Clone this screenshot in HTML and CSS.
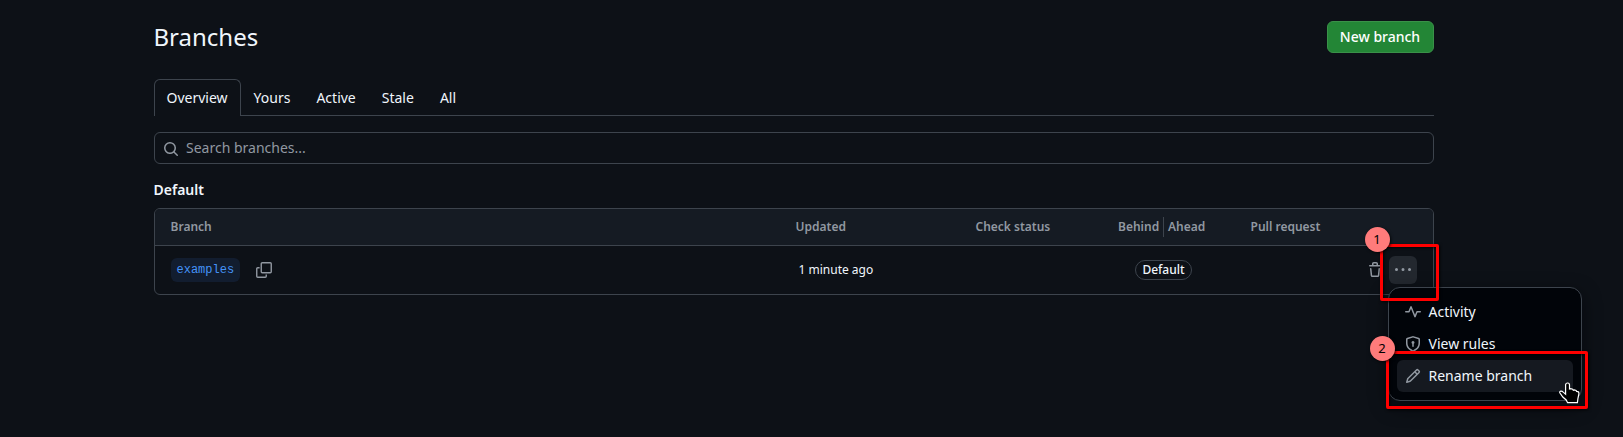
FILE: index.html
```
<!DOCTYPE html>
<html lang="en">
<head>
<meta charset="utf-8">
<title>Branches</title>
<link rel="stylesheet" href="styles.css">
</head>
<body>
<main class="page">
  <header class="page-header">
    <h1 class="title">Branches</h1>
    <button class="btn-primary">New branch</button>
  </header>
  <nav class="tabs">
    <a class="tab selected">Overview</a>
    <a class="tab">Yours</a>
    <a class="tab">Active</a>
    <a class="tab">Stale</a>
    <a class="tab">All</a>
  </nav>
  <div class="search">
    <svg class="icon" viewBox="0 0 16 16"><path d="M10.68 11.74a6 6 0 0 1-7.922-8.982 6 6 0 0 1 8.982 7.922l3.04 3.04a.749.749 0 0 1-.326 1.275.749.749 0 0 1-.734-.215ZM11.5 7a4.499 4.499 0 1 0-8.997 0A4.499 4.499 0 0 0 11.5 7Z"/></svg>
    <span>Search branches...</span>
  </div>
  <h2 class="subtitle">Default</h2>
  <section class="table">
    <div class="row head">
      <div>Branch</div>
      <div>Updated</div>
      <div class="check">Check status</div>
      <div class="compare"><span class="behind">Behind</span><span class="ahead">Ahead</span></div>
      <div class="check">Pull request</div>
      <div></div>
    </div>
    <div class="row body">
      <div class="branch">
        <a class="branch-name">examples</a>
        <svg class="icon" viewBox="0 0 16 16"><path d="M6.25 .75h8a1 1 0 0 1 1 1v8a1 1 0 0 1-1 1h-8a1 1 0 0 1-1-1v-8a1 1 0 0 1 1-1ZM3.6 5.75H1.75a1 1 0 0 0-1 1v7.5a1 1 0 0 0 1 1h7.5a1 1 0 0 0 1-1v-1.8" fill="none" stroke="currentColor" stroke-width="1.4"/></svg>
      </div>
      <div class="time">1 minute ago</div>
      <div></div>
      <div class="pill-cell"><span class="pill">Default</span></div>
      <div></div>
      <div class="actions">
        <svg class="icon" viewBox="0 0 16 16"><path d="M11 1.75V3h2.25a.75.75 0 0 1 0 1.5H2.75a.75.75 0 0 1 0-1.5H5V1.75C5 .784 5.784 0 6.75 0h2.5C10.216 0 11 .784 11 1.75ZM4.496 6.675l.66 6.6a.25.25 0 0 0 .249.225h5.19a.25.25 0 0 0 .249-.225l.66-6.6a.75.75 0 0 1 1.492.149l-.66 6.6A1.748 1.748 0 0 1 10.595 15h-5.19a1.75 1.75 0 0 1-1.741-1.575l-.66-6.6a.75.75 0 1 1 1.492-.15ZM6.5 1.75V3h3V1.75a.25.25 0 0 0-.25-.25h-2.5a.25.25 0 0 0-.25.25Z"/></svg>
        <button class="kebab"><svg class="icon" viewBox="0 0 16 16"><path d="M8 9a1.5 1.5 0 1 0 0-3 1.5 1.5 0 0 0 0 3ZM1.5 9a1.5 1.5 0 1 0 0-3 1.5 1.5 0 0 0 0 3Zm13 0a1.5 1.5 0 1 0 0-3 1.5 1.5 0 0 0 0 3Z"/></svg></button>
      </div>
    </div>
  </section>
</main>
<div class="menu">
  <div class="item"><svg class="icon" viewBox="0 0 16 16"><path d="M6 2c.306 0 .582.187.696.471L10 10.731l1.304-3.26A.751.751 0 0 1 12 7h3.25a.75.75 0 0 1 0 1.5h-2.742l-1.812 4.528a.751.751 0 0 1-1.392 0L6 4.77 4.696 8.03A.75.75 0 0 1 4 8.5H.75a.75.75 0 0 1 0-1.5h2.742l1.812-4.529A.751.751 0 0 1 6 2Z"/></svg><span>Activity</span></div>
  <div class="item"><svg class="icon" viewBox="0 0 16 16"><path d="m8.533.133 5.25 1.68A1.75 1.75 0 0 1 15 3.48V7c0 1.566-.32 3.182-1.303 4.682-.983 1.498-2.585 2.813-5.032 3.855a1.697 1.697 0 0 1-1.33 0c-2.447-1.042-4.049-2.357-5.032-3.855C1.32 10.182 1 8.566 1 7V3.48a1.75 1.75 0 0 1 1.217-1.667l5.25-1.68a1.748 1.748 0 0 1 1.066 0Zm-.61 1.429.001.001-5.25 1.68a.251.251 0 0 0-.174.237V7c0 1.36.275 2.666 1.057 3.859.784 1.194 2.121 2.342 4.366 3.298a.196.196 0 0 0 .154 0c2.245-.957 3.582-2.103 4.366-3.297C13.225 9.666 13.5 8.358 13.5 7V3.48a.25.25 0 0 0-.174-.238l-5.25-1.68a.25.25 0 0 0-.153 0ZM9.5 6.5c0 .536-.286 1.032-.75 1.3v2.45a.75.75 0 0 1-1.5 0V7.8A1.5 1.5 0 1 1 9.5 6.5Z"/></svg><span>View rules</span></div>
  <div class="item active"><svg class="icon" viewBox="0 0 16 16"><path d="M11.013 1.427a1.75 1.75 0 0 1 2.474 0l1.086 1.086a1.75 1.75 0 0 1 0 2.474l-8.61 8.61c-.21.21-.47.364-.756.445l-3.251.93a.75.75 0 0 1-.927-.928l.929-3.25c.081-.286.235-.547.445-.758l8.61-8.61Zm.176 4.823L9.75 4.81l-6.286 6.287a.253.253 0 0 0-.064.108l-.558 1.953 1.953-.558a.253.253 0 0 0 .108-.064Zm1.238-3.763a.25.25 0 0 0-.354 0L10.811 3.75l1.439 1.44 1.263-1.263a.25.25 0 0 0 0-.354Z"/></svg><span>Rename branch</span></div>
</div>
<div class="marker marker-one"></div>
<div class="marker marker-two"></div>
<div class="step step-one">1</div>
<div class="step step-two">2</div>
<svg class="cursor" viewBox="0 0 21 22"><path d="M8.6 1c1.2 0 1.9.8 1.9 2v4l1.2-.3 2 .5.6 1 1-.3 1.8.5.5 1 1.4.2c.9.4 1 1.2.9 2.2l-.9 4.2-.6 4.7H8.6L7.2 18 3.8 15 .8 10.800c-.3-.9.3-1.600 1.100-1.700 1-.1 1.700.4 2.300 1l2.400 2V3c0-1.200.8-2 2-2Z"/></svg>
</body>
</html>
```

FILE: styles.css
```
* { box-sizing: border-box; }
body {
  margin: 0;
  height: 437px;
  overflow: hidden;
  background: #0d1117;
  color: #f0f6fc;
  font: 14px/21px "Noto Sans", sans-serif;
}
button { font: inherit; color: inherit; margin: 0; }
.icon { width: 16px; height: 16px; flex: none; display: block; fill: currentColor; color: #9198a1; }
.page { width: 1280px; margin-left: 153.5px; padding-top: 21px; }
.page-header { display: flex; justify-content: space-between; height: 32px; align-items: center; }
.title { margin: 0; font-size: 24px; font-weight: 400; line-height: 32px; }
.btn-primary {
  width: 107px;
  height: 32px;
  padding: 0 0 2px;
  border: 1px solid #3a9149;
  border-radius: 6px;
  background: #238636;
  color: #fff;
  font-weight: 500;
  white-space: nowrap;
}
.tabs { display: flex; height: 37px; margin-top: 26px; box-shadow: inset 0 -1px #3d444d; }
.tab { padding: 8px 13px; height: 37px; }
.selected {
  padding: 7px 12px;
  border: 1px solid #3d444d;
  border-bottom: 0;
  border-radius: 6px 6px 0 0;
  background: #0d1117;
}
.search {
  display: flex;
  align-items: center;
  gap: 7px;
  height: 32px;
  margin-top: 16px;
  padding: 0 8.5px 1px;
  border: 1px solid #3d444d;
  border-radius: 6px;
  color: #9198a1;
}
.search .icon { position: relative; top: 1px; }
.subtitle { margin: 15px 0 8px; font-size: 14px; font-weight: 600; line-height: 21px; }
.table { border: 1px solid #3d444d; border-radius: 6px; overflow: hidden; }
.row {
  display: grid;
  grid-template-columns: 625px 179px 143px 132px 114px 1fr;
  padding-left: 16px;
  align-items: center;
  font-size: 12px;
  line-height: 18px;
}
.head { height: 37px; background: #151b23; color: #9198a1; font-weight: 600; border-bottom: 1px solid #3d444d; }
.body { height: 48px; }
.check { padding-left: 1px; }
.compare { display: flex; align-items: center; line-height: 20px; padding-left: .5px; }
.behind { width: 46px; border-right: 1px solid #3d444d; }
.ahead { padding-left: 4px; }
.branch { display: flex; align-items: center; gap: 16px; }
.branch-name {
  width: 69px;
  height: 24px;
  padding-left: 6px;
  border-radius: 6px;
  background: #121d2f;
  color: #4493f8;
  font: 12px/24px "Liberation Mono", monospace;
}
.time { padding-left: 3px; }
.pill-cell { padding-left: 17.5px; }
.pill {
  display: block;
  width: 57px;
  height: 20px;
  border: 1px solid #3d444d;
  border-radius: 10px;
  font-weight: 500;
  line-height: 18px;
  text-align: center;
}
.actions { display: flex; align-items: center; gap: 6px; padding-left: 3.5px; }
.kebab {
  display: grid;
  place-items: center;
  width: 28px;
  height: 28px;
  padding: 0;
  border: 0;
  border-radius: 6px;
  background: #23282f;
}
.menu {
  position: absolute;
  left: 1388px;
  top: 287px;
  width: 194px;
  height: 114px;
  padding: 8px;
  border: 1px solid #3d444d;
  border-radius: 12px;
  background: #010409;
  box-shadow: 0 6px 18px rgba(1, 4, 9, .6);
}
.item { display: flex; align-items: center; gap: 7.5px; height: 32px; padding-left: 8px; border-radius: 6px; }
.item span { padding-bottom: 2px; }
.active { background: #151920; }
.marker {
  position: absolute;
  border: 3px solid #f00;
  border-radius: 2px;
  box-shadow: 1px 1px 3px rgba(0, 0, 0, .8), inset 1px 1px 3px rgba(0, 0, 0, .8);
}
.marker-one { left: 1380px; top: 244px; width: 59px; height: 57px; }
.marker-two { left: 1386px; top: 351px; width: 202px; height: 58px; }
.step {
  position: absolute;
  width: 25px;
  height: 25px;
  border-radius: 50%;
  background: #ff7b7b;
  box-shadow: 1px 1px 3px rgba(0, 0, 0, .8);
  color: #000;
  font-size: 13px;
  line-height: 25px;
  text-align: center;
}
.step-one { left: 1364.5px; top: 226.5px; }
.step-two { left: 1369.5px; top: 335.5px; }
.cursor { position: absolute; left: 1559px; top: 382px; width: 21px; height: 22px; fill: #000; stroke: #fff; stroke-width: 1.2; }
```
